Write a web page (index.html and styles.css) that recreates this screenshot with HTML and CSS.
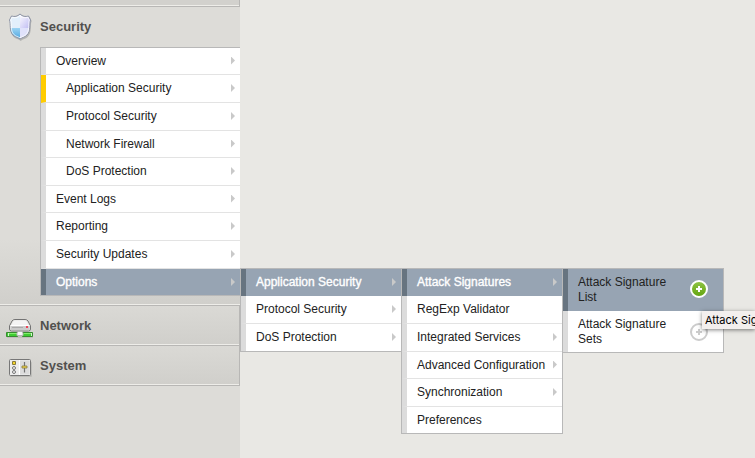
FILE: index.html
```
<!DOCTYPE html>
<html lang="en">
<head>
<meta charset="utf-8">
<title>Security</title>
<link rel="stylesheet" href="styles.css">
</head>
<body>
<aside class="sidebar">
  <div class="sliver"></div>
  <section class="security">
    <header class="heading">
      <svg class="icon" width="30" height="32" viewBox="0 0 30 32">
        <defs>
          <linearGradient id="blue" x1="0" y1="0" x2="0" y2="1"><stop offset="0" stop-color="#9bd3f3"/><stop offset="1" stop-color="#3f9cdb"/></linearGradient>
          <linearGradient id="lilac" x1="0" y1="0" x2="1" y2="1"><stop offset="0" stop-color="#fff"/><stop offset="1" stop-color="#b9b5f2"/></linearGradient>
          <clipPath id="shield"><path d="M15 3.5C12.5 6 9.500 6.500 6.500 5.500L4.500 9C6 13 4 20 8 24C10 26 13 26.500 15 28C17 26.500 20 26 22 24C26 20 24 13 25.500 9L23.500 5.500C20.500 6.500 17.500 6 15 3.500Z"/></clipPath>
        </defs>
        <path d="M15 3C12 6 9 6 6 5L4 9C6 13 3 20 8 25C10 27 13 27 15 29C17 27 20 27 22 25C27 20 24 13 26 9L24 5C21 6 18 6 15 3Z" fill="#b4b4b2" transform="translate(.7 1)"/>
        <g clip-path="url(#shield)">
          <path d="M3 2H15V17H3Z" fill="#e2effb"/><path d="M15 2H27V17H15Z" fill="url(#lilac)"/>
          <path d="M3 17H15V30H3Z" fill="url(#blue)"/><path d="M15 17H27V30H15Z" fill="#e0e2fb"/>
        </g>
        <path d="M15 3C12.500 5.500 9.500 6 6.500 5L4.500 9C6 13 4 20 8 24C10 26 13 26.500 15 28C17 26.500 20 26 22 24C26 20 24 13 25.500 9L23.500 5C20.500 6 17.500 5.500 15 3Z" fill="none" stroke="#8c93a4"/>
        <path d="M15 4.500C12.500 7 9.500 7.200 7 6.200L5.700 9C7 13 5 19.500 8.700 23.300C10.500 25.300 13 25.500 15 26.800C17 25.500 19.500 25.300 21.300 23.300C25 19.500 23 13 24.300 9L23 6.200C20.500 7.200 17.500 7 15 4.500Z" fill="none" stroke="#fff" stroke-opacity=".75"/>
      </svg>
      <h2>Security</h2>
    </header>
    <ul class="menu main">
      <li class="short more">Overview</li>
      <li class="child current more">Application Security</li>
      <li class="child more">Protocol Security</li>
      <li class="child short more">Network Firewall</li>
      <li class="child more">DoS Protection</li>
      <li class="short more">Event Logs</li>
      <li class="more">Reporting</li>
      <li class="more">Security Updates</li>
      <li class="active more">Options</li>
    </ul>
  </section>
  <section class="closed">
    <svg class="icon" width="30" height="28" viewBox="0 0 30 28">
      <path d="M2 20H28V23H2Z" fill="#aaa9a6" opacity=".45"/>
      <path d="M7 6Q8 4.500 10 4.500H20Q22 4.500 23 6L25.500 11V14Q25.500 16 23.500 16H6.500Q4.500 16 4.500 14V11Z" fill="#e7e7e5" stroke="#737373"/>
      <path d="M9 5.500H21L23.500 10H6.500Z" fill="#f4f4f4"/><path d="M5.500 11H24.500V15H5.500Z" fill="#cbcbcb"/><path d="M5.500 10.500H24.500" stroke="#fff"/>
      <path d="M7 12.500H18" stroke="#aaa"/><path d="M21 11H23V13H21Z" fill="#ed4256"/>
      <path d="M1.500 17.500H12.500V21.500H1.500ZM17.500 17.500H27.500V21.500H17.500Z" fill="#3fcd32" stroke="#388a31"/>
      <path d="M3 18.500H12M19 18.500H27" stroke="#83ee6c"/><path d="M12 20.500V18L13 16.500H17L18 18V20.500Z" fill="#f7f7f7" stroke="#b5b5b5"/><path d="M3.500 18V21M26.500 18V21" stroke="#d5efcf"/>
    </svg>
    <h2>Network</h2>
  </section>
  <section class="closed">
    <svg class="icon" width="30" height="28" viewBox="0 0 30 28">
      <rect x="5" y="7" width="22" height="15" rx="1" fill="#aaa9a6" opacity=".5"/>
      <rect x="4.500" y="4.500" width="21" height="16" rx="1" fill="#ededed" stroke="#777"/>
      <path d="M15 5.500H24.500V19.500H15Z" fill="#dcdcdc"/><path d="M14.500 5V20" stroke="#fff"/>
      <path d="M7.500 6.500H10.500V9.500H7.500Z" fill="#f5d52a" stroke="#887b3c"/>
      <circle cx="9" cy="13" r="1.500" fill="#f5f5f5" stroke="#777"/><circle cx="9" cy="17" r="1.500" fill="#f5f5f5" stroke="#777"/>
      <path d="M19.500 7V17.500" stroke="#737373" stroke-width="1.200"/><path d="M17 11H22V13H17Z" fill="#f5d94b" stroke="#85783c" stroke-width=".8"/>
    </svg>
    <h2>System</h2>
  </section>
</aside>
<nav class="flyouts">
  <ul class="menu fly">
    <li class="active more">Application Security</li>
    <li class="more">Protocol Security</li>
    <li class="more last">DoS Protection</li>
  </ul>
  <ul class="menu fly options">
    <li class="active more">Attack Signatures</li>
    <li>RegExp Validator</li>
    <li class="more">Integrated Services</li>
    <li class="short more">Advanced Configuration</li>
    <li class="more">Synchronization</li>
    <li class="last">Preferences</li>
  </ul>
  <ul class="menu fly tall">
    <li class="hover"><span>Attack Signature<br>List</span>
      <svg class="add" width="18" height="18" viewBox="0 0 18 18"><defs><linearGradient id="green" x1="0" y1="0" x2="0" y2="1"><stop offset="0" stop-color="#91c548"/><stop offset="1" stop-color="#61a30c"/></linearGradient></defs><circle cx="9" cy="9" r="8" fill="url(#green)" stroke="#fff" stroke-width="2"/><path d="M9 6V12M6 9H12" stroke="#fff" stroke-width="2"/></svg>
    </li>
    <li class="last"><span>Attack Signature<br>Sets</span>
      <svg class="add" width="18" height="18" viewBox="0 0 18 18"><circle cx="9" cy="9" r="8" fill="#fff" stroke="#ccc" stroke-width="2"/><path d="M9 6V12M6 9H12" stroke="#ccc" stroke-width="2"/></svg>
    </li>
  </ul>
</nav>
<div class="tooltip">Attack Sig</div>
</body>
</html>
```
FILE: styles.css
```
* { box-sizing: border-box; }
body {
  position: relative;
  display: flex;
  width: 755px;
  height: 458px;
  margin: 0;
  overflow: hidden;
  background: #e9e8e4;
  color: #222;
  font: 12px/14px "Liberation Sans", Arial, sans-serif;
}
.sidebar { flex: none; width: 240px; height: 458px; background: #dddcd8; }
.sliver {
  height: 7px;
  background: #d2d1cd;
  border-right: 1px solid #b8b7b5;
  border-bottom: 1px solid #b8b7b5;
  box-shadow: inset 0 -1px #eeede9;
}
.security {
  height: 299px;
  background: linear-gradient(#dddcd8 78%, #d0cfcb);
  border-bottom: 1px solid #b8b7b5;
  box-shadow: inset 0 -1px #eeede9;
}
.heading { display: flex; height: 40px; padding: 4px 0 0 5px; }
h2 { margin: 0; font-size: 13px; line-height: 16px; color: #51504e; }
.heading h2 { padding: 8px 0 0 5px; }
.icon { flex: none; }
.closed {
  display: flex;
  height: 40px;
  padding: 9px 0 0 5px;
  background: linear-gradient(#dad9d5, #d0cfcb);
  border-right: 1px solid #b8b7b5;
  border-bottom: 1px solid #b8b7b5;
  box-shadow: inset 0 -1px #eeede9;
}
.closed h2 { padding: 3px 0 0 5px; }
.menu {
  margin: 0;
  padding: 0;
  list-style: none;
  background: #fff;
  border: 1px solid #b8b8b8;
}
.main { width: 200px; margin-left: 40px; border-right: 0; }
.menu li {
  display: flex;
  align-items: center;
  justify-content: space-between;
  height: 28px;
  padding: 0 5px 1px 10px;
  border-left: 5px solid #dcdcdc;
  border-bottom: 1px solid #e3e3e3;
  white-space: nowrap;
}
.menu .short { height: 27px; }
.menu .child { padding-left: 20px; }
.menu .current { border-left-color: #fc0; }
.menu .active {
  height: 27px;
  padding-bottom: 1px;
  color: #fff;
  background: #97a4b3;
  border-left-color: #677480;
  border-bottom: 0;
  -webkit-text-stroke: .35px #fff;
}
.main .active { height: 26px; padding-bottom: 0; }
.more::after {
  content: "";
  width: 4px;
  height: 8px;
  background: #c9c9c9;
  clip-path: polygon(0 0, 100% 50%, 0 100%);
}
.flyouts { display: flex; flex: none; align-items: flex-start; padding-top: 268px; }
.fly { width: 162px; margin-right: -1px; }
.menu .last { height: 27px; border-bottom: 0; }
.options .last { height: 26px; padding-bottom: 0; }
.tall li { height: 42px; padding: 0 15px 0 10px; line-height: 15px; border-bottom: 0; }
.menu .hover { background: #97a4b3; border-left-color: #677480; }
.hover .add { margin-bottom: 2px; }
.tall .last { height: 41px; }
.tooltip {
  position: absolute;
  left: 702px;
  right: 0;
  top: 311px;
  height: 18px;
  padding-left: 3px;
  color: #000;
  background: #f3efee;
  box-shadow: 0 1px 4px rgba(0, 0, 0, .5);
  font: 11px/18px Inter, sans-serif;
  white-space: nowrap;
}
```
